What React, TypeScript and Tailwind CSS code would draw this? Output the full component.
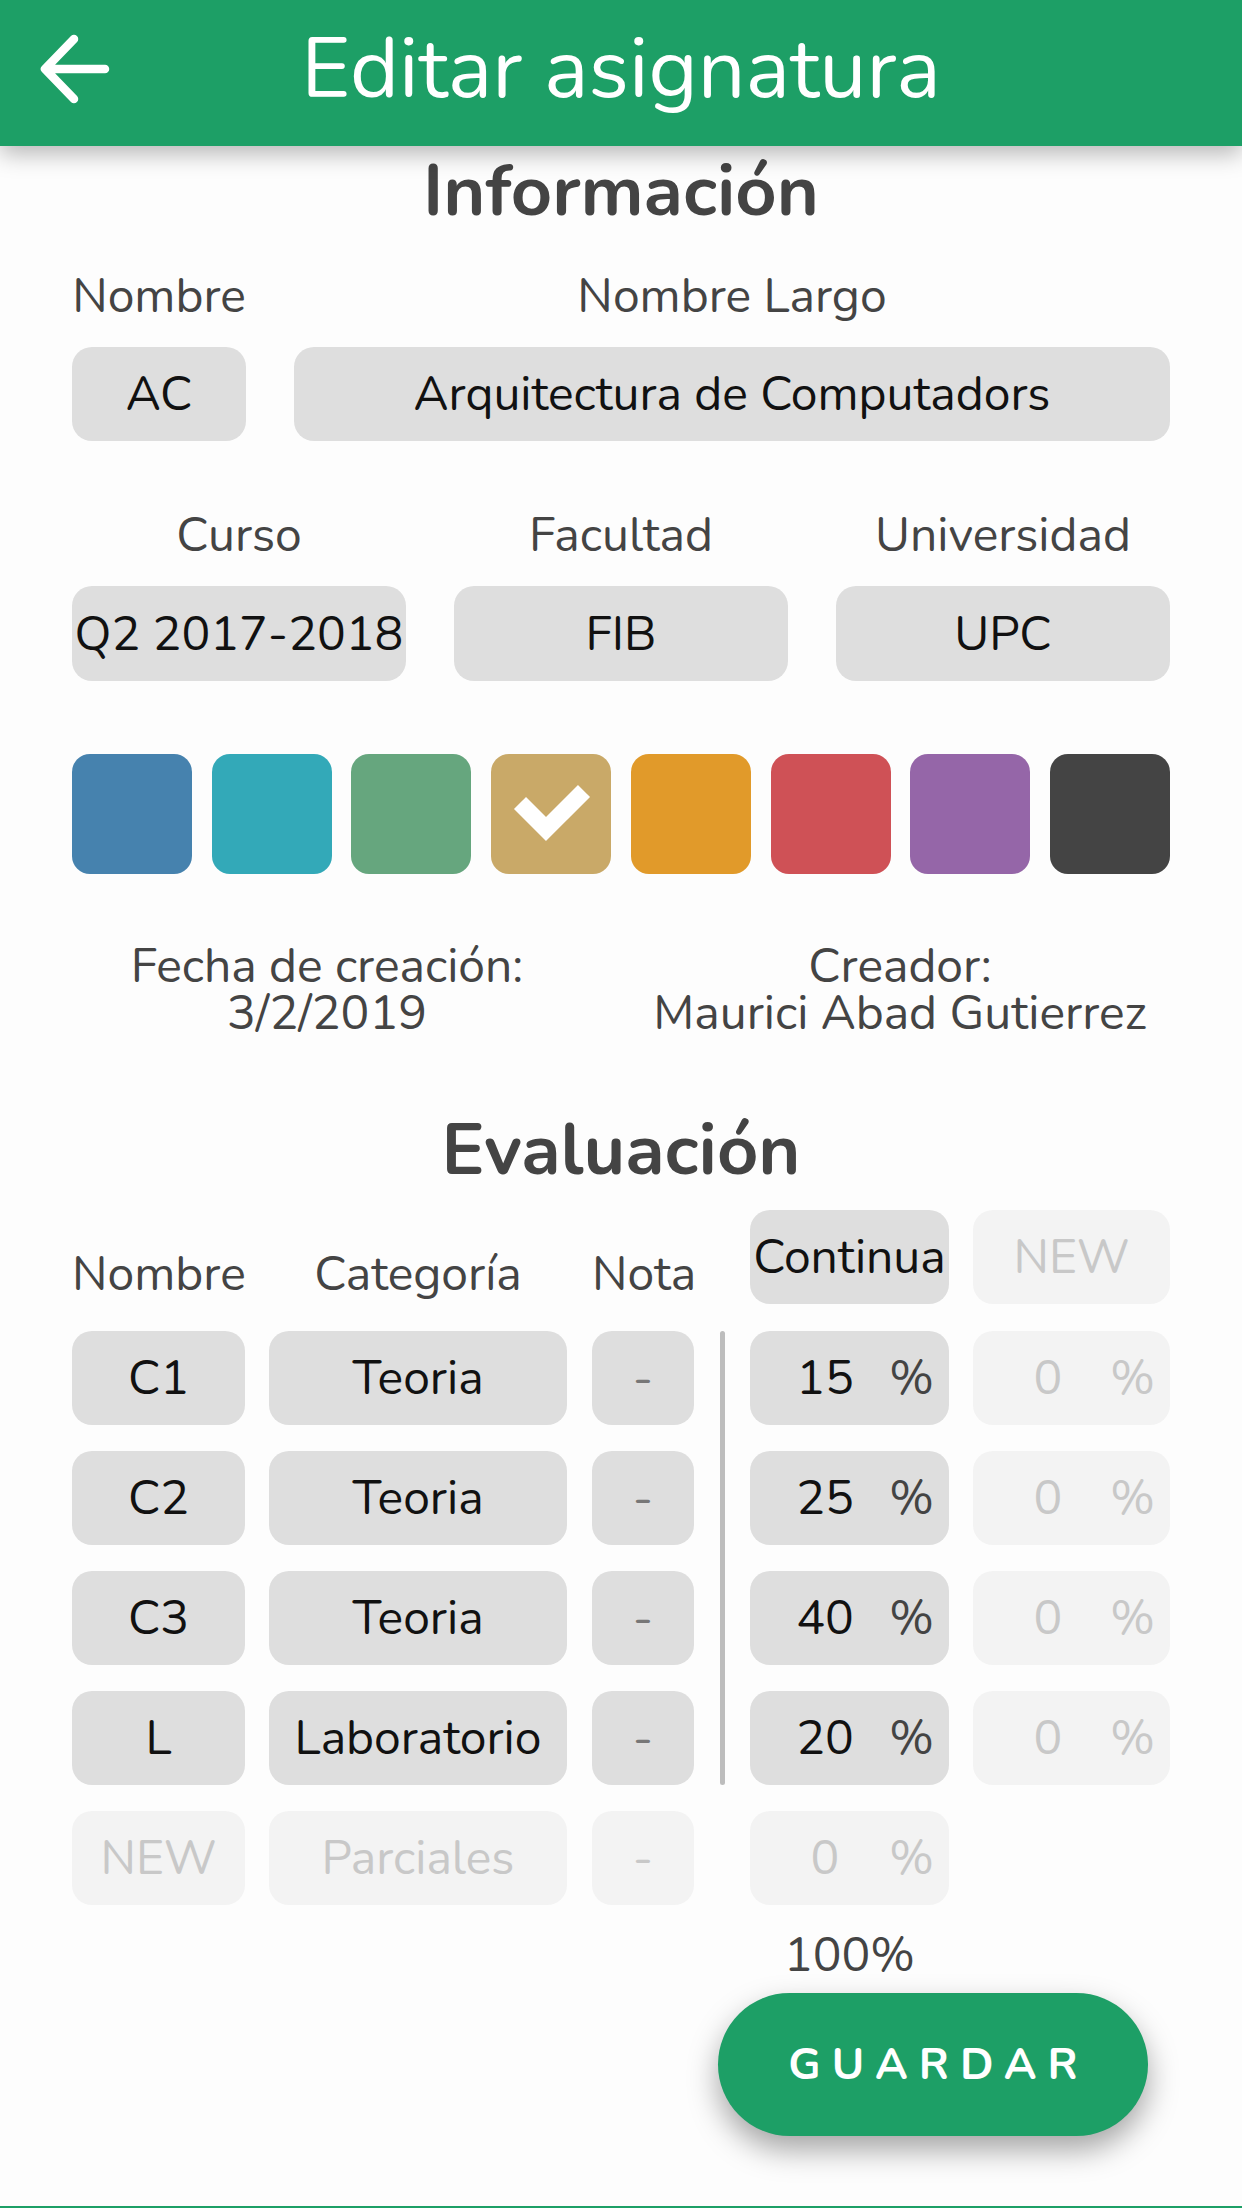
const swatches = ['#4682ae', '#33a9b8', '#66a67e', '#c9a968', '#e19a2a', '#cf5156', '#9566a8', '#444444'];

const rows = [
  { name: 'C1', cat: 'Teoria', pct: '15' },
  { name: 'C2', cat: 'Teoria', pct: '25' },
  { name: 'C3', cat: 'Teoria', pct: '40' },
  { name: 'L', cat: 'Laboratorio', pct: '20' },
];

function Box({ children, className = '' }: { children: React.ReactNode; className?: string }) {
  return (
    <div className={`flex items-center justify-center rounded-[20px] bg-[#dedede] text-[#111] ${className}`}>
      {children}
    </div>
  );
}

function Ghost({ children, className = '' }: { children: React.ReactNode; className?: string }) {
  return (
    <div className={`flex items-center justify-center rounded-[20px] bg-[#f3f3f3] text-[#c8c8c8] ${className}`}>
      {children}
    </div>
  );
}

function Percent({ value, ghost }: { value: string; ghost?: boolean }) {
  return (
    <div
      className={`flex h-full w-full items-center rounded-[20px] pr-[15px] ${
        ghost ? 'bg-[#f3f3f3] text-[#c8c8c8]' : 'bg-[#dedede] text-[#111]'
      }`}
    >
      <span className="ml-[20px] w-[110px] text-center">{value}</span>
      <span className={`ml-auto ${ghost ? 'text-[#c8c8c8]' : 'text-[#444]'}`}>%</span>
    </div>
  );
}

export default function App() {
  return (
    <div className="flex min-h-[2208px] flex-col bg-[#fdfdfd] font-['Nunito','Lato',sans-serif] text-[48px] leading-[48px] text-[#444]">
      <header className="relative z-10 grid h-[146px] grid-cols-[146px_1fr_146px] items-center bg-[#1d9f66] shadow-[0_8px_22px_rgba(0,0,0,0.28)]">
        <svg viewBox="0 0 146 146" className="h-[146px] w-[146px]" aria-hidden="true">
          <path
            d="M105 69H45M74 39L45 69L74 99"
            fill="none"
            stroke="#fff"
            strokeWidth={8.5}
            strokeLinecap="round"
            strokeLinejoin="round"
          />
        </svg>
        <h1 className="pb-[6px] text-center text-[84px] leading-[84px] text-white">Editar asignatura</h1>
        <div />
      </header>

      <main className="flex flex-1 flex-col px-[72px]">
        <h2 className="mt-[9px] text-center text-[72px] font-bold leading-[72px] text-[#444]">Información</h2>

        <div className="mt-[45px] flex gap-[48px] text-center">
          <div className="w-[174px]">Nombre</div>
          <div className="flex-1">Nombre Largo</div>
        </div>
        <div className="mt-[27px] flex h-[94px] gap-[48px]">
          <Box className="w-[174px]">AC</Box>
          <Box className="flex-1">Arquitectura de Computadors</Box>
        </div>

        <div className="mt-[70px] grid grid-cols-3 gap-[48px] text-center">
          <div>Curso</div>
          <div>Facultad</div>
          <div>Universidad</div>
        </div>
        <div className="mt-[27px] grid h-[95px] grid-cols-3 gap-[48px]">
          <Box>Q2 2017-2018</Box>
          <Box>FIB</Box>
          <Box>UPC</Box>
        </div>

        <div className="mt-[73px] flex h-[120px] justify-between">
          {swatches.map((c, i) => (
            <div key={c} className="flex w-[120px] items-center justify-center rounded-[18px]" style={{ backgroundColor: c }}>
              {i === 3 && (
                <svg viewBox="0 0 120 120" className="h-[120px] w-[120px]" aria-hidden="true">
                  <path d="M29 49L55 75L93 37" fill="none" stroke="#fff" strokeWidth={17} strokeLinejoin="miter" />
                </svg>
              )}
            </div>
          ))}
        </div>

        <div className="mt-[69px] flex gap-[48px] text-center leading-[47px]">
          <div className="w-[510px]">
            <div>Fecha de creación:</div>
            <div>3/2/2019</div>
          </div>
          <div className="flex-1">
            <div>Creador:</div>
            <div>Maurici Abad Gutierrez</div>
          </div>
        </div>

        <h2 className="mt-[77px] text-center text-[72px] font-bold leading-[72px] text-[#444]">Evaluación</h2>

        <div className="mt-[24px] flex h-[94px] items-end text-center">
          <div className="w-[173px] pb-[6px]">Nombre</div>
          <div className="ml-[24px] w-[298px] pb-[6px]">Categoría</div>
          <div className="ml-[25px] w-[102px] pb-[6px]">Nota</div>
          <div className="w-[56px]" />
          <Box className="h-full w-[199px]">Continua</Box>
          <Ghost className="ml-[24px] h-full w-[197px]">NEW</Ghost>
        </div>

        <div className="mt-[27px] flex">
          <div className="flex flex-col gap-[26px]">
            {rows.map((r) => (
              <div key={r.name} className="flex h-[94px]">
                <Box className="w-[173px]">{r.name}</Box>
                <Box className="ml-[24px] w-[298px]">{r.cat}</Box>
                <Box className="ml-[25px] w-[102px] text-[#777]">-</Box>
              </div>
            ))}
          </div>
          <div className="flex w-[56px] justify-center">
            <div className="w-[5px] rounded-full bg-[#bdbdbd]" />
          </div>
          <div className="flex flex-col gap-[26px]">
            {rows.map((r) => (
              <div key={r.name} className="flex h-[94px]">
                <div className="w-[199px]">
                  <Percent value={r.pct} />
                </div>
                <div className="ml-[24px] w-[197px]">
                  <Percent value="0" ghost />
                </div>
              </div>
            ))}
          </div>
        </div>

        <div className="mt-[26px] flex h-[94px]">
          <Ghost className="w-[173px]">NEW</Ghost>
          <Ghost className="ml-[24px] w-[298px]">Parciales</Ghost>
          <Ghost className="ml-[25px] w-[102px]">-</Ghost>
          <div className="ml-[56px] w-[199px]">
            <Percent value="0" ghost />
          </div>
        </div>

        <div className="mt-[26px] flex">
          <div className="ml-[678px] w-[199px] text-center">100%</div>
        </div>

        <div className="mt-[14px] flex justify-end pr-[22px]">
          <button className="h-[143px] w-[430px] rounded-full bg-[#1d9f66] pl-[11px] text-[44px] font-bold tracking-[11px] text-white shadow-[0_14px_30px_rgba(0,0,0,0.35)]">
            GUARDAR
          </button>
        </div>
      </main>

      <div className="h-[2px] bg-[#1d9f66]" />
    </div>
  );
}
